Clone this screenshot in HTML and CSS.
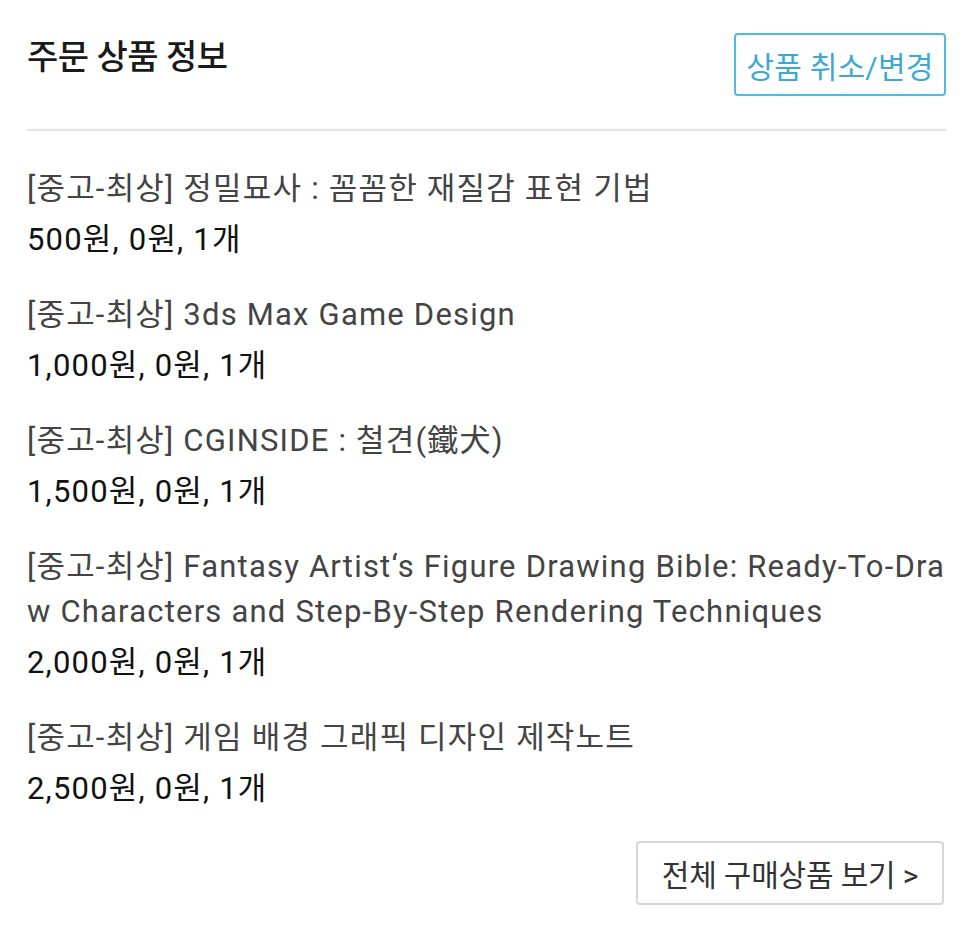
FILE: index.html
```html
<!DOCTYPE html>
<html lang="ko">
<head>
<meta charset="utf-8">
<link rel="stylesheet" href="styles.css">
</head>
<body>
<div class="page">
  <div class="header">
    <h2 class="title">주문 상품 정보</h2>
    <button class="cancel-btn">상품 취소/변경</button>
  </div>
  <ul class="items">
    <li class="item">
      <div class="name">[중고-최상] 정밀묘사 : 꼼꼼한 재질감 표현 기법</div>
      <div class="price">500원, 0원, 1개</div>
    </li>
    <li class="item">
      <div class="name">[중고-최상] 3ds Max Game Design</div>
      <div class="price">1,000원, 0원, 1개</div>
    </li>
    <li class="item">
      <div class="name">[중고-최상] CGINSIDE : 철견(鐵犬)</div>
      <div class="price">1,500원, 0원, 1개</div>
    </li>
    <li class="item">
      <div class="name">[중고-최상] Fantasy Artist‘s Figure Drawing Bible: Ready-To-Draw Characters and Step-By-Step Rendering Techniques</div>
      <div class="price">2,000원, 0원, 1개</div>
    </li>
    <li class="item">
      <div class="name">[중고-최상] 게임 배경 그래픽 디자인 제작노트</div>
      <div class="price">2,500원, 0원, 1개</div>
    </li>
  </ul>
  <div class="footer">
    <button class="all-btn">전체 구매상품 보기 &gt;</button>
  </div>
</div>
</body>
</html>
```
FILE: styles.css
```css
* { box-sizing: border-box; }
html, body { margin: 0; padding: 0; background: #fff; }
body {
  font-family: Roboto, "Noto Sans CJK KR", sans-serif;
  color: #111;
}
.page {
  width: 970px;
  padding: 33px 24px 0 27px;
}
.header {
  display: flex;
  justify-content: space-between;
  align-items: flex-start;
  height: 98px;
  border-bottom: 2px solid #e3e3e3;
}
.title {
  margin: 3px 0 0 0;
  font-size: 34px;
  font-weight: 500;
  color: #1a1a1a;
  letter-spacing: -0.5px;
  line-height: 42px;
}
.cancel-btn {
  width: 212px;
  height: 63px;
  border: 2px solid #52b9df;
  border-radius: 4px;
  background: #fff;
  color: #3ba9d4;
  font-family: inherit;
  font-size: 30px;
  letter-spacing: 0.2px;
  padding: 0;
}
.items {
  list-style: none;
  margin: 0;
  padding: 35px 0 0 0;
}
.item {
  margin-bottom: 23px;
}
.name {
  font-size: 31px;
  line-height: 45px;
  color: #444;
  word-break: break-all;
  letter-spacing: 1.2px;
}
.price {
  font-size: 31px;
  line-height: 58px;
  color: #111;
  letter-spacing: 1.2px;
}
.footer {
  display: flex;
  justify-content: flex-end;
}
.all-btn {
  width: 308px;
  height: 64px;
  border: 2px solid #d6d6d6;
  border-radius: 4px;
  background: #fff;
  color: #333;
  font-family: inherit;
  font-size: 30px;
  letter-spacing: -0.2px;
  padding: 0;
  margin-right: 2px;
}
```
